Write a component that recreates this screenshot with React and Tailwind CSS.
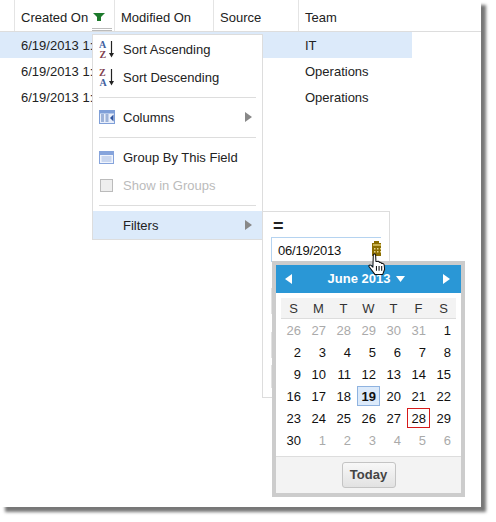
import React from "react";

const Arrow = ({ className = "" }) => (
  <svg width="7" height="10" viewBox="0 0 7 10" className={className}><path d="M0 0L7 5L0 10Z" fill="currentColor" /></svg>
);

const Sort = ({ top, bottom, topC, botC }) => (
  <svg width="17" height="19" viewBox="0 0 17 19" style={{ fontFamily: "'Liberation Serif', serif" }}>
    <text x="0" y="8" fontSize="10" fontWeight="700" fill={topC}>{top}</text>
    <text x="0.5" y="18" fontSize="10" fontWeight="700" fill={botC}>{bottom}</text>
    <path d="M12.5 1V15" stroke="#222" strokeWidth="1.2" />
    <path d="M10 13L12.5 17.5L15 13Z" fill="#222" />
  </svg>
);

const ColumnsIcon = () => (
  <svg width="16" height="14" viewBox="0 0 16 14">
    <rect x="0.5" y="0.5" width="15" height="13" fill="#e8eefa" stroke="#7f9fd8" />
    <rect x="1" y="1" width="14" height="2.5" fill="#7f9fd8" />
    <path d="M2 5H5M2 7H5M2 9H5M2 11H5M6.5 5H9.5M6.5 7H9.5M6.5 9H9.5M6.5 11H9.5" stroke="#5578b8" />
    <path d="M14.5 4.5L11 8L14.5 11.5Z" fill="#2f55a0" />
  </svg>
);

const GroupIcon = () => (
  <svg width="15" height="13" viewBox="0 0 15 13">
    <rect x="0.5" y="0.5" width="14" height="12" fill="#f0f4fc" stroke="#86a4dc" />
    <rect x="1" y="1" width="13" height="3" fill="#86a4dc" />
    <path d="M2.5 6H12.5M2.5 8H12.5M2.5 10H12.5" stroke="#a3b9e2" />
  </svg>
);

const Item = ({ icon, label, arrow, disabled, active }) => (
  <div className={`flex items-center h-[28px] pl-[6px] pr-[10px] ${active ? "bg-[#dceafa]" : ""}`}>
    <span className="w-[24px] shrink-0 flex items-center">{icon}</span>
    <span className={`flex-1 pt-px ${disabled ? "text-[#bbbbbb]" : "text-[#222]"}`}>{label}</span>
    {arrow && <Arrow className="text-[#888]" />}
  </div>
);

const Sep = () => (
  <div className="h-[12px] flex items-center px-[6px]"><div className="h-px w-full bg-[#dddddd]" /></div>
);

const weeks = [
  [[26,0],[27,0],[28,0],[29,0],[30,0],[31,0],[1,1]],
  [[2,1],[3,1],[4,1],[5,1],[6,1],[7,1],[8,1]],
  [[9,1],[10,1],[11,1],[12,1],[13,1],[14,1],[15,1]],
  [[16,1],[17,1],[18,1],[19,1],[20,1],[21,1],[22,1]],
  [[23,1],[24,1],[25,1],[26,1],[27,1],[28,1],[29,1]],
  [[30,1],[1,0],[2,0],[3,0],[4,0],[5,0],[6,0]],
];

const Cell = ({ d, cur }) => {
  const sel = cur && d === 19;
  const today = cur && d === 28;
  return (
    <div className="w-[25px] h-[22px] flex items-center justify-center">
      <span className={`w-[23px] h-[20px] leading-[19px] text-right pr-[3px] border ${sel ? "bg-[#dceafa] border-[#8fb3e0] font-bold text-[#111]" : today ? "border-[#d61a1a] text-[#111]" : cur ? "border-transparent text-[#111]" : "border-transparent text-[#aaaaaa]"}`}>{d}</span>
    </div>
  );
};

const Calendar = () => (
  <div className="absolute left-[9px] top-[49px] w-[193px] h-[236px] border-4 border-[#cccccc] bg-white flex flex-col">
    <div className="h-[28px] shrink-0 bg-[#2a97d6] flex items-center justify-between pl-[9px] pr-[11px] text-white">
      <Arrow className="rotate-180" />
      <div className="flex items-center gap-[6px] font-bold ml-[1px] mr-[3px]">
        <span>June 2013</span>
        <svg width="9" height="6" viewBox="0 0 9 6"><path d="M0 0H9L4.5 6Z" fill="#fff" /></svg>
      </div>
      <Arrow />
    </div>
    <div className="mx-[5px] mt-[5px] h-[21px] shrink-0 bg-[#f3f3f3] border-b border-[#dddddd] flex text-[#333]">
      {["S","M","T","W","T","F","S"].map((w, i) => (
        <div key={i} className="w-[25px] text-center leading-[21px]">{w}</div>
      ))}
    </div>
    <div className="mx-[5px] flex flex-col">
      {weeks.map((row, i) => (
        <div key={i} className="flex">
          {row.map(([d, c], j) => <Cell key={j} d={d} cur={!!c} />)}
        </div>
      ))}
    </div>
    <div className="mt-[5px] flex-1 bg-[#f3f3f3] border-t border-[#dddddd] flex items-center justify-center">
      <button className="w-[54px] h-[26px] rounded-[3px] border border-[#c4c4c4] bg-gradient-to-b from-[#f8f8f8] to-[#e2e2e2] font-bold text-[#444]">Today</button>
    </div>
  </div>
);

const Hand = () => (
  <svg width="19" height="23" viewBox="0 0 18 22" className="absolute left-[105px] top-[41px]">
    <path d="M5 1.5C5.8 .6 7 .9 7.2 2L7.5 8.2L9 8C10 7.8 10.6 8.3 10.8 9C11.8 8.7 12.6 9.2 12.8 10C14 9.7 15.2 10.2 15.4 11.5L15.8 15.5L14 20.5H6.5L1 13.2C.3 12 1.6 10.9 2.8 11.8L4.6 13.5Z" fill="#fff" stroke="#111" strokeWidth="1" strokeLinejoin="round" />
    <path d="M8 12.5V17M10.5 12.5V17M13 12.5V17" stroke="#111" strokeWidth="1" />
  </svg>
);

const CalIcon = () => (
  <svg width="9" height="16" viewBox="0 0 9 16" className="absolute right-0 top-[3px]">
    <rect x="2" y="0" width="5" height="2.5" fill="#8a6d00" />
    <rect x="0" y="2" width="10" height="13" fill="#8a6d00" />
    <rect x="1" y="3" width="9" height="2" fill="#c7b050" />
    <path d="M2 7H3.5V8.5H2ZM5 7H6.5V8.5H5ZM8 7H9V8.5H8ZM2 10H3.5V11.5H2ZM5 10H6.5V11.5H5ZM8 10H9V11.5H8Z" fill="#e3d48c" />
  </svg>
);

const cols = [
  ["w-[100px]", "Created On"],
  ["w-[99px]", "Modified On"],
  ["w-[85px]", "Source"],
  ["flex-1", "Team"],
];

const rows = [
  ["6/19/2013 1:36 PM", "IT", true],
  ["6/19/2013 1:36 PM", "Operations", false],
  ["6/19/2013 1:36 PM", "Operations", false],
];

export default function App() {
  return (
    <div className="w-[496px] h-[522px] bg-white text-[13px] text-[#222]" style={{ fontFamily: "'Liberation Sans', Arial, sans-serif" }}>
      <div className="relative w-[481px] h-[507px] bg-white shadow-[5px_5px_3px_#777777]">
        <div className="flex h-[32px] pl-[14px] border-b border-[#dddddd]">
          {cols.map(([w, t], i) => (
            <div key={i} className={`${w} relative border-l border-[#e4e4e4] pl-[6px] pt-[10px] leading-[15px]`}>
              {t}
              {i === 0 && (
                <>
                  <svg width="12" height="8" viewBox="0 0 12 8" className="absolute left-[78px] top-[13px]">
                    <path d="M0 0H12L8 4V8H4V4Z" fill="#1d7a2c" />
                  </svg>
                  <div className="absolute left-[77px] top-[28px] w-[20px] h-[3px] border-y border-[#bbbbbb]" />
                </>
              )}
            </div>
          ))}
        </div>
        <div className="w-[412px]">
          {rows.map(([d, t, sel], i) => (
            <div key={i} className={`flex h-[26px] items-center pt-px pl-[21px] ${sel ? "bg-[#dceafa]" : ""}`}>
              <span className="w-[71px] mr-[213px] overflow-hidden whitespace-nowrap">{d}</span>
              <span>{t}</span>
            </div>
          ))}
        </div>

        <div className="absolute left-[92px] top-[34px] w-[171px] h-[206px] bg-white border border-[#dddddd]">
          <Item label="Sort Ascending" icon={<Sort top="A" bottom="Z" topC="#3f5f9f" botC="#7f3f4f" />} />
          <Item label="Sort Descending" icon={<Sort top="Z" bottom="A" topC="#7f3f4f" botC="#3f5f9f" />} />
          <Sep />
          <Item label="Columns" icon={<ColumnsIcon />} arrow />
          <Sep />
          <Item label="Group By This Field" icon={<GroupIcon />} />
          <Item label="Show in Groups" disabled icon={<span className="block w-[13px] h-[13px] border border-[#bbbbbb] bg-[#eeeeee] ml-px" />} />
          <Sep />
          <Item label="Filters" arrow active />
        </div>

        <div className="absolute left-[262px] top-[211px] w-[128px] h-[187px] bg-white border border-[#dddddd]">
          <div className="pl-[10px] h-[24px] leading-[28px] text-[18px] font-bold text-[#222]">=</div>
          <div className="relative ml-[8px] mt-[1px] w-[110px] h-[25px] border-l border-t border-[#b5d3f0] pl-[6px] leading-[25px] tracking-[-0.2px] text-[#111]">
            06/19/2013
            <CalIcon />
          </div>
          <div className="absolute left-[8px] top-[76px] w-[2px] h-[26px] bg-[#e2e2e2]" />
          <div className="absolute left-[8px] top-[120px] w-[2px] h-[26px] bg-[#e2e2e2]" />
          <div className="absolute left-[8px] top-[153px] w-[2px] h-[23px] bg-[#e2e2e2]" />
          <Calendar />
          <Hand />
        </div>
      </div>
    </div>
  );
}
